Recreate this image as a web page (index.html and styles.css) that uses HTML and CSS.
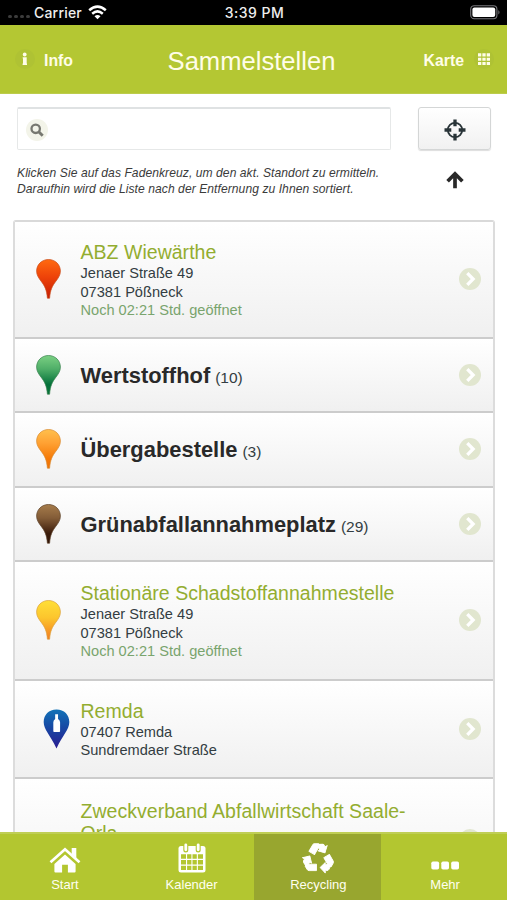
FILE: index.html
```html
<!DOCTYPE html>
<html lang="de">
<head>
<meta charset="utf-8">
<title>Sammelstellen</title>
<link rel="stylesheet" href="styles.css">
</head>
<body>
<svg class="defs" width="0" height="0" aria-hidden="true">
  <defs>
    <linearGradient id="red" x2="0" y2="1"><stop stop-color="#ff6a10"/><stop offset=".45" stop-color="#ee4309"/><stop offset="1" stop-color="#c51d05"/></linearGradient>
    <linearGradient id="green" x2="0" y2="1"><stop stop-color="#7bd083"/><stop offset=".35" stop-color="#4fae68"/><stop offset=".75" stop-color="#04713a"/><stop offset="1" stop-color="#08733b"/></linearGradient>
    <linearGradient id="orange" x2="0" y2="1"><stop stop-color="#ffc04d"/><stop offset=".35" stop-color="#ffa133"/><stop offset=".75" stop-color="#f57a08"/><stop offset="1" stop-color="#ee7208"/></linearGradient>
    <linearGradient id="brown" x2="0" y2="1"><stop stop-color="#a67c4b"/><stop offset=".35" stop-color="#835c37"/><stop offset=".75" stop-color="#3b1b0a"/><stop offset="1" stop-color="#301508"/></linearGradient>
    <linearGradient id="yellow" x2="0" y2="1"><stop stop-color="#ffdf38"/><stop offset=".45" stop-color="#fcc52d"/><stop offset="1" stop-color="#f37b20"/></linearGradient>
    <linearGradient id="blue" x2="0" y2="1"><stop stop-color="#1272b7"/><stop offset=".45" stop-color="#1749a4"/><stop offset="1" stop-color="#2a1c91"/></linearGradient>
    <path id="pin" d="M12.500 .5C5.700 .5.600 5.600.600 12.100c0 4 2 6.700 4.500 10.100 3.600 4.800 5.700 8.600 6.300 17h2.200c.6-8.400 2.700-12.200 6.300-17 2.500-3.400 4.500-6.100 4.500-10.100C24.400 5.600 19.300.5 12.500.5z"/>
    <g id="arrow"><circle cx="11" cy="11" r="11" fill="#e1e6cf"/><path d="M8.300 5.200l5.800 5.800-5.800 5.800" fill="none" stroke="#fff" stroke-width="3.300"/></g>
    <path id="side" d="M-1.800 5.400v6.400h-7.400q-1.300 0-2-1.200l-2-3.300 1.300-1.900zM1.800 8.700l5.200-5v2.100h6.200l-2.700 5q-.6 1-1.700 1H7v2.500z" stroke="#fff" stroke-width=".9" stroke-linejoin="round"/>
  </defs>
</svg>
<div class="status">
  <div class="carrier"><span class="dots"><i></i><i></i><i></i><i></i></span><span>Carrier</span>
    <svg width="19" height="15" viewBox="0 0 19 15" fill="none" stroke="#fff" stroke-width="2.500"><path d="M1.200 5.200Q9.500-2 17.800 5.200M4.200 8.700q5.300-4.600 10.600 0"/><path d="M9.500 14.300l-3-3.100q3-2.400 6 0z" fill="#fff" stroke="none"/></svg>
  </div>
  <div class="clock">3:39 PM</div>
  <svg class="battery" width="31" height="15" viewBox="0 0 31 15"><rect x=".7" y=".7" width="26.200" height="13" rx="3.500" fill="none" stroke="#77777b" stroke-width="1.100"/><rect x="2.400" y="2.400" width="22.800" height="9.600" rx="2" fill="#fff"/><path d="M28.400 5v4.500q2.200-2.200 0-4.500z" fill="#77777b"/></svg>
</div>
<header class="bar">
  <div class="info"><svg width="20" height="20" viewBox="0 0 20 20"><circle cx="10" cy="10" r="10" fill="#afc234"/><circle cx="9.700" cy="5.500" r="1.900" fill="#fffde8"/><path d="M7.700 8.300h4v6.300h.3v1.300H7.600v-1.300h.4v-5h-.3z" fill="#fffde8"/></svg><span>Info</span></div>
  <h1>Sammelstellen</h1>
  <div class="map"><span>Karte</span><svg width="20" height="20" viewBox="0 0 20 20"><circle cx="10" cy="10" r="10" fill="#afc234"/><path d="M4 5.900h12M4 10.200h12M4 14.500h12" stroke="#fffde8" stroke-width="3.100" stroke-dasharray="3.300 1.050"/></svg></div>
</header>
<main>
  <div class="search-row">
    <div class="search"><svg width="22" height="22" viewBox="0 0 22 22"><circle cx="11" cy="11" r="11" fill="#f3f4e9"/><circle cx="9.700" cy="9.800" r="4.200" fill="none" stroke="#777870" stroke-width="2.300"/><path d="M12.700 12.800l4 4" stroke="#777870" stroke-width="2.900"/></svg></div>
    <div class="locate"><svg width="22" height="22" viewBox="0 0 22 22" fill="none" stroke="#293438"><circle cx="11" cy="11" r="7.200" stroke-width="1.800"/><path d="M11 .5v6.800M11 14.700v6.800M.5 11h6.800M14.700 11h6.800" stroke-width="3.300"/></svg></div>
  </div>
  <div class="hint-row">
    <p>Klicken Sie auf das Fadenkreuz, um den akt. Standort zu ermitteln.<br>Daraufhin wird die Liste nach der Entfernung zu Ihnen sortiert.</p>
    <svg width="18" height="18" viewBox="0 0 18 18" fill="none" stroke="#292929" stroke-width="3.700"><path d="M1.600 10.200L9 2.800l7.400 7.400M9 3v14.200"/></svg>
  </div>
  <ul class="list">
    <li class="tall"><svg class="pin" viewBox="0 0 25 40"><use href="#pin" fill="url(#red)" stroke="#c94a18" stroke-width=".7"/></svg><div class="text"><h2>ABZ Wiewärthe</h2><p>Jenaer Straße 49</p><p>07381 Pößneck</p><p class="open">Noch 02:21 Std. geöffnet</p></div><svg class="go" viewBox="0 0 22 22"><use href="#arrow"/></svg></li>
    <li class="group"><svg class="pin" viewBox="0 0 25 40"><use href="#pin" fill="url(#green)" stroke="#35804a" stroke-width=".7"/></svg><div class="text"><b>Wertstoffhof</b><span>(10)</span></div><svg class="go" viewBox="0 0 22 22"><use href="#arrow"/></svg></li>
    <li class="group"><svg class="pin" viewBox="0 0 25 40"><use href="#pin" fill="url(#orange)" stroke="#d98a2e" stroke-width=".7"/></svg><div class="text"><b>Übergabestelle</b><span>(3)</span></div><svg class="go" viewBox="0 0 22 22"><use href="#arrow"/></svg></li>
    <li class="group"><svg class="pin" viewBox="0 0 25 40"><use href="#pin" fill="url(#brown)" stroke="#5b4028" stroke-width=".7"/></svg><div class="text"><b>Grünabfallannahmeplatz</b><span>(29)</span></div><svg class="go" viewBox="0 0 22 22"><use href="#arrow"/></svg></li>
    <li class="tall second"><svg class="pin" viewBox="0 0 25 40"><use href="#pin" fill="url(#yellow)" stroke="#dba13a" stroke-width=".7"/></svg><div class="text"><h2>Stationäre Schadstoffannahmestelle</h2><p>Jenaer Straße 49</p><p>07381 Pößneck</p><p class="open">Noch 02:21 Std. geöffnet</p></div><svg class="go" viewBox="0 0 22 22"><use href="#arrow"/></svg></li>
    <li class="medium"><svg class="pin drop" viewBox="0 0 26 39"><path d="M13 .5C5.500.5.500 5.800.500 12.700.500 20 7 25.500 13 38.500 19 25.500 25.500 20 25.500 12.700 25.500 5.800 20.500.5 13 .5z" fill="url(#blue)"/><path d="M11.700 5.200h2.800v4.600q2 1.200 2 3.200v8.700q0 .8-.8.800h-5q-.8 0-.8-.8V13q0-2 1.800-3.200z" fill="#fff"/></svg><div class="text"><h2>Remda</h2><p>07407 Remda</p><p>Sundremdaer Straße</p></div><svg class="go" viewBox="0 0 22 22"><use href="#arrow"/></svg></li>
    <li class="last"><span class="pin"></span><div class="text"><h2>Zweckverband Abfallwirtschaft Saale-<br>Orla</h2></div><svg class="go" viewBox="0 0 22 22"><use href="#arrow"/></svg></li>
  </ul>
</main>
<nav class="tabs">
  <div class="tab"><svg width="32" height="30" viewBox="0 0 32 30" fill="#fff"><path d="M16 11.500l10.600 9.600v7.400q0 1-1 1h-6.700v-7.800h-5.800v7.800H6.400q-1 0-1-1v-7.400z"/><path d="M1.500 19.300L16 6.300l14.500 13" fill="none" stroke="#fff" stroke-width="2.700"/><path d="M22.700 5h4.600v10.200l-4.600-4z"/></svg><span>Start</span></div>
  <div class="tab"><svg width="32" height="30" viewBox="0 0 32 30"><rect x="2.500" y="3" width="27" height="26.500" rx="2.500" fill="#fff"/><path d="M5 11.200h5v4.500H5zm6.100 0h4.300v4.500h-4.300zm5.400 0h4.300v4.500h-4.300zm5.400 0h5.100v4.500h-5.100zM5 17h5v4.400H5zm6.100 0h4.300v4.400h-4.300zm5.400 0h4.300v4.400h-4.300zm5.400 0h5.100v4.400h-5.100zM5 22.700h5V27H5zm6.100 0h4.300V27h-4.300zm5.400 0h4.300V27h-4.300zm5.400 0h5.100V27h-5.100z" fill="#b3c630"/><path d="M9.800 2v5M22.200 2v5" stroke="#b3c630" stroke-width="5" stroke-linecap="round"/><path d="M9.800 1.800v5M22.200 1.800v5" stroke="#fff" stroke-width="2.800" stroke-linecap="round"/></svg><span>Kalender</span></div>
  <div class="tab active"><svg width="32" height="30" viewBox="-16 -16 32 30" fill="#fff"><g transform="translate(.3 -.2)"><use href="#side"/><use href="#side" transform="rotate(120)"/><use href="#side" transform="rotate(240)"/></g></svg><span>Recycling</span></div>
  <div class="tab"><svg width="32" height="30" viewBox="0 0 32 30" fill="#fff"><rect x="2.300" y="18.500" width="7.800" height="8" rx="1.700"/><rect x="12.300" y="18.500" width="7.700" height="8" rx="1.700"/><rect x="22.200" y="18.500" width="7.800" height="8" rx="1.700"/></svg><span>Mehr</span></div>
</nav>
</body>
</html>
```
FILE: styles.css
```css
* { box-sizing: border-box; }
body { margin: 0; height: 900px; overflow: hidden; display: flex; flex-direction: column; background: #fff; font-family: "Liberation Sans", Arial, sans-serif; color: #333d42; }
h1, h2, p, ul { margin: 0; padding: 0; font-weight: normal; }
svg { display: block; flex: none; overflow: visible; }
.defs { position: absolute; }
.status { height: 25px; flex: none; background: #000; color: #eee; display: grid; grid-template-columns: 1fr auto 1fr; align-items: center; padding: 0 6px 0 8px; font: 500 14px/25px Inter, sans-serif; letter-spacing: .2px; }
.clock { letter-spacing: .45px; }
.carrier { display: flex; align-items: center; }
.carrier svg { margin-left: 6px; }
.dots { display: flex; gap: 2.500px; width: 26px; padding-top: 8px; }
.dots i { width: 3.500px; height: 3.500px; border-radius: 50%; background: #3c3c3c; }
.battery { justify-self: end; }
.bar { height: 69px; flex: none; background: #b4c733; color: #fffde8; display: grid; grid-template-columns: 1fr auto 1fr; align-items: center; padding: 0 13px 0 15px; border-bottom: 1px solid #bccc4c; font-size: 15.800px; font-weight: bold; }
.info, .map { display: flex; align-items: center; gap: 9px; padding-top: 4px; }
.info svg, .map svg { margin-top: -4px; }
.map { justify-content: flex-end; gap: 10px; }
.bar h1 { font-size: 25.600px; line-height: 30px; padding-top: 3px; margin-left: -6px; }
main { flex: 1; min-height: 0; overflow: hidden; padding: 13px 12px 0 13px; }
.search-row { display: flex; justify-content: space-between; padding: 0 4px 0 4px; }
.search { width: 374px; height: 43px; border: 1px solid #e6e8e8; border-top: 2px solid #dfe2e3; border-radius: 2px; padding: 10px 0 0 8px; }
.locate { width: 73px; height: 43px; border: 1px solid #d4d6d6; border-radius: 3px; background: linear-gradient(#fff, #f1f1f1); display: flex; align-items: center; justify-content: center; padding-top: 2px; box-shadow: 0 1px 1px #ddd; }
.hint-row { display: flex; padding: 16px 0 0 4px; height: 70px; }
.hint-row p { width: 428px; font-size: 12.100px; letter-spacing: .06px; line-height: 15.500px; font-style: italic; white-space: nowrap; color: #3b3b3b; }
.hint-row svg { margin: 5px 0 0 .5px; }
.list { list-style: none; width: 482px; border: 2px solid #dcdcdc; border-top-color: #d9d9d9; border-radius: 3px; }
.list li { display: flex; align-items: center; padding: 0 12px 0 20px; border-bottom: 2px solid #ccc; background: linear-gradient(#fff, #f0f0f0); }
.pin { width: 27px; height: 40px; flex: none; }
.text { flex: 1; padding: 1px 0 0 18.500px; }
.go { width: 22px; height: 22px; }
.tall { height: 116.500px; }
.list h2 { font-size: 19.500px; letter-spacing: .03px; line-height: 22px; color: #93ad30; white-space: nowrap; }
.list p { font-size: 14.600px; line-height: 18.300px; position: relative; top: 1px; }
.list .open { color: #79a46d; }
.group { height: 74.500px; }
.group .text { padding-top: 2px; }
.group b { font-size: 21.900px; color: #292929; }
.group span { font-size: 15.500px; margin-left: 5px; }
.list .second { height: 118.500px; }
.medium { height: 98.500px; }
.list .drop { margin-left: 7.500px; margin-right: -7.500px; }
.list .last { height: 124px; }
.last .text { align-self: flex-start; padding-top: 20.500px; }
.tabs { height: 68px; flex: none; display: grid; grid-template-columns: repeat(4, 1fr); background: #b3c630; border-top: 2px solid #bfce55; color: #fffff0; font-size: 13px; line-height: 16px; }
.tab { display: flex; flex-direction: column; align-items: center; padding-top: 9px; gap: 4px; margin-left: 3px; }
.tab.active { background: #98a62f; margin: 0 -.5px 0 .5px; padding-left: 2px; }
```
